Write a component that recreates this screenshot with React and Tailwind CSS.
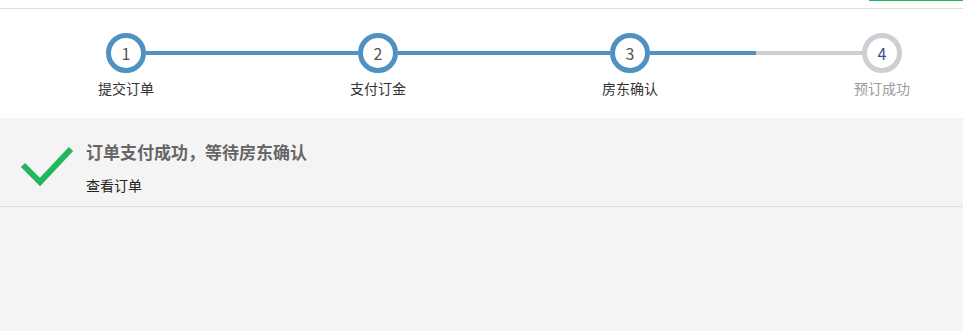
const steps = [
  { n: 1, label: '提交订单', left: null, right: 'blue' },
  { n: 2, label: '支付订金', left: 'blue', right: 'blue' },
  { n: 3, label: '房东确认', left: 'blue', right: 'blue' },
  { n: 4, label: '预订成功', left: 'gray', right: null, todo: true },
]

function Line({ tone }) {
  if (!tone) return <div className="flex-1" />
  return <div className={`flex-1 h-[4px] ${tone === 'blue' ? 'bg-[#4f91c1]' : 'bg-[#cdcfd4]'}`} />
}

export default function App() {
  return (
    <div className="w-full h-[331px] overflow-hidden bg-[#f4f4f4] font-['Microsoft_YaHei','Noto_Sans_CJK_SC',sans-serif]">
      {/* 顶部导航条 */}
      <div className="h-[9px] bg-white border-b border-[#e0e0e0]">
        <div className="ml-[869px] w-[94px] h-px bg-[#22b75f]" />
      </div>

      {/* 步骤条 */}
      <div className="bg-white h-[109px] pt-[24px]">
        <div className="w-[1008px] grid grid-cols-4">
          {steps.map(s => (
            <div key={s.n} className="flex flex-col items-center">
              <div className="w-full flex items-center">
                <Line tone={s.left} />
                <div
                  className={`w-[40px] h-[40px] rounded-full border-[5px] bg-white flex items-center justify-center text-[16px] leading-none ${
                    s.todo ? 'border-[#cdcfd4] text-[#3f4d8c]' : 'border-[#4f91c1] text-[#555]'
                  }`}>
                  {s.n}
                </div>
                <Line tone={s.right} />
              </div>
              <div className={`mt-[6px] text-[14px] leading-[18px] ${s.todo ? 'text-[#999]' : 'text-[#333]'}`}>
                {s.label}
              </div>
            </div>
          ))}
        </div>
      </div>

      {/* 结果提示 */}
      <div className="pt-[23px] pb-[12px] border-b border-[#dddddd] flex items-start">
        <svg className="ml-[19px] mt-[3px] w-[56px] h-[42px] shrink-0" viewBox="0 0 56 42">
          <polyline points="4,21 21,38 52,5" fill="none" stroke="#22b75f" strokeWidth="6" />
        </svg>
        <div className="ml-[11px]">
          <div className="text-[17px] leading-[22px] font-bold text-[#666]">订单支付成功，等待房东确认</div>
          <a className="block mt-[13px] text-[14px] leading-[18px] text-[#222] cursor-pointer">查看订单</a>
        </div>
      </div>
    </div>
  )
}
